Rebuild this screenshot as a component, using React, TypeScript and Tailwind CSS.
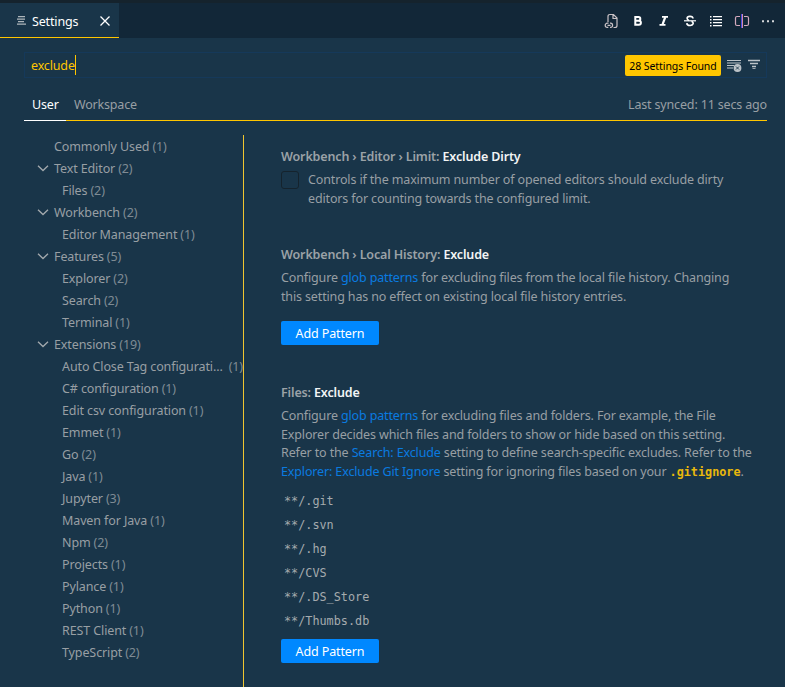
import type { ReactNode } from "react";

type TreeItem = { label: string; count: number; level: 0 | 1; open?: boolean; clipped?: boolean };

const tree: TreeItem[] = [
  { label: "Commonly Used", count: 1, level: 0 },
  { label: "Text Editor", count: 2, level: 0, open: true },
  { label: "Files", count: 2, level: 1 },
  { label: "Workbench", count: 2, level: 0, open: true },
  { label: "Editor Management", count: 1, level: 1 },
  { label: "Features", count: 5, level: 0, open: true },
  { label: "Explorer", count: 2, level: 1 },
  { label: "Search", count: 2, level: 1 },
  { label: "Terminal", count: 1, level: 1 },
  { label: "Extensions", count: 19, level: 0, open: true },
  { label: "Auto Close Tag configurati...", count: 1, level: 1, clipped: true },
  { label: "C# configuration", count: 1, level: 1 },
  { label: "Edit csv configuration", count: 1, level: 1 },
  { label: "Emmet", count: 1, level: 1 },
  { label: "Go", count: 2, level: 1 },
  { label: "Java", count: 1, level: 1 },
  { label: "Jupyter", count: 3, level: 1 },
  { label: "Maven for Java", count: 1, level: 1 },
  { label: "Npm", count: 2, level: 1 },
  { label: "Projects", count: 1, level: 1 },
  { label: "Pylance", count: 1, level: 1 },
  { label: "Python", count: 1, level: 1 },
  { label: "REST Client", count: 1, level: 1 },
  { label: "TypeScript", count: 2, level: 1 },
];

const patterns = ["**/.git", "**/.svn", "**/.hg", "**/CVS", "**/.DS_Store", "**/Thumbs.db"];

function Chevron() {
  return (
    <svg className="h-4 w-4" viewBox="0 0 16 16" fill="none" stroke="#a3a9ad" strokeWidth="1.3">
      <path d="M3 5.700 8 10.500l5-4.800" />
    </svg>
  );
}

function Toolbar() {
  return (
    <div className="ml-auto flex items-center gap-[10px] pr-[9px]">
      <svg className="h-4 w-4" viewBox="0 0 16 16" fill="none" stroke="#c9c2c6" strokeWidth="1.2">
        <path d="M4 9V3.500q0-2 2-2h3.500L13 5v7.500q0 2-2 2H9.500M9 1.500V5.500h4" />
        <path d="M4.500 10.200H3.300a2.100 2.100 0 0 0 0 4.200h1M6 14.400h.5a2.100 2.100 0 0 0 0-4.200H6M3.500 12.300h3" />
      </svg>
      <svg className="h-4 w-4" viewBox="0 0 16 16" fill="none" stroke="#fff" strokeWidth="2">
        <path d="M5.300 4.100h3.200a1.800 1.800 0 0 1 0 3.600H5.300M5.300 7.700h3.600a2 2 0 0 1 0 4H5.300ZM5.300 3.100v9.600" />
      </svg>
      <svg className="h-4 w-4" viewBox="0 0 16 16" fill="none" stroke="#fff">
        <path d="M6 3.800h6M3.500 11.800h6" strokeWidth="1.700" />
        <path d="M9.300 4 6.500 11.700" strokeWidth="2.200" />
      </svg>
      <svg className="h-4 w-4" viewBox="0 0 16 16" fill="none" stroke="#fff" strokeWidth="1.600">
        <path d="M2 7.800h12" strokeWidth="1.200" />
        <path d="M11 5.500C10.800 2.700 5.200 2.700 5.100 5.300c0 1 .7 1.700 1.800 2.100M9.500 8.300c3.200 1.300 1.400 4.300-1.500 4.200-1.800 0-3.100-.8-3.200-2.400" />
      </svg>
      <svg className="h-4 w-4" viewBox="0 0 16 16" fill="#fff">
        <path d="M2 3h1.500v1.500H2zM2 6h1.500v1.500H2zM2 9h1.500v1.500H2zM2 12h1.500v1.500H2zM5 3h9v1.200H5zM5 6h9v1.200H5zM5 9h9v1.200H5zM5 12h9v1.200H5z" />
      </svg>
      <svg className="h-4 w-4" viewBox="0 0 16 16" fill="none">
        <path d="M6 3.500H3q-1.500 0-1.500 1.500v6q0 1.500 1.500 1.500h3M10 3.500h3q1.500 0 1.500 1.500v6q0 1.500-1.500 1.500h-3" stroke="#d3a9bd" strokeWidth="1.200" />
        <path d="M7.500 1v14" stroke="#4a4fe0" strokeWidth="1" />
        <path d="M8.500 1v14" stroke="#d68ba8" strokeWidth="1" />
      </svg>
      <svg className="h-4 w-4" viewBox="0 0 16 16" fill="#d5d8da">
        <path d="M2 7.200h2v2H2zM7 7.200h2v2H7zM12 7.200h2v2h-2z" />
      </svg>
    </div>
  );
}

function Title({ path, name }: { path: string; name: string }) {
  return (
    <h2 className="h-[18px] text-[12.500px] leading-[18px] font-semibold tracking-[-0.140px] text-[#9ba2a7]">
      {path} <span className="text-[#f2f4f5]">{name}</span>
    </h2>
  );
}

function Line({ children }: { children: ReactNode }) {
  return <div className="whitespace-nowrap">{children}</div>;
}

function Link({ children }: { children: ReactNode }) {
  return <span className="text-[#0a7be0]">{children}</span>;
}

function AddButton() {
  return (
    <button className="block h-6 w-[98px] rounded-[2px] bg-[#0088ff] pt-px text-[12.500px] leading-[24px] tracking-[-0.120px] text-white">
      Add Pattern
    </button>
  );
}

export default function App() {
  return (
    <div className="flex h-[687px] w-[785px] flex-col overflow-hidden bg-[#193549] font-['Noto_Sans',sans-serif] text-[12.500px] text-[#989fa4]">
      <div className="h-[3px] bg-[#15232d]" />
      <header className="flex h-[35px] bg-[#122738]">
        <div className="flex w-[119px] items-center border-b border-[#ffc600] bg-[#193549] pl-4 text-white">
          <svg className="h-4 w-4" viewBox="0 0 16 16" fill="#aeb6bb">
            <path d="M2 4h7v1.300H2zM1 6.500h8v1.300H1zM2 9h6v1.300H2zM1 11.500h9v1.300H1z" />
          </svg>
          <span className="pt-[4px] tracking-[-0.150px]">Settings</span>
          <svg className="ml-auto mr-[6px] mt-px h-4 w-4" viewBox="0 0 16 16" stroke="#fff" strokeWidth="1.300">
            <path d="m3.500 3.500 9 9M12.500 3.500l-9 9" />
          </svg>
        </div>
        <Toolbar />
      </header>

      <div className="mt-[14px] ml-6 flex h-[26px] w-[743px] items-center border border-[#15395a] pl-[6px] text-[#ffc600]">
        <span className="pt-[2px] tracking-[-0.150px]">exclude</span>
        <span className="h-5 w-px bg-[#ffc600]" />
        <div className="ml-auto flex items-center pr-[4px]">
          <span className="mt-px h-[21px] w-24 rounded-[2px] bg-[#ffc600] text-center text-[10.500px] leading-[23px] tracking-[-0.080px] whitespace-nowrap text-black">
            28 Settings Found
          </span>
          <svg className="ml-[5px] h-4 w-4" viewBox="0 0 16 16" fill="none" stroke="#bcc3c8" strokeWidth="1.200">
            <path d="M1 3.500h14M1 6h14M1 8.500h7M1 11h6" />
            <circle cx="11.500" cy="11" r="3.900" fill="#bcc3c8" stroke="none" />
            <path d="m10 9.500 3 3M13 9.500l-3 3" stroke="#193549" strokeWidth="0.900" />
          </svg>
          <svg className="ml-1 h-4 w-4" viewBox="0 0 16 16" stroke="#bcc3c8" strokeWidth="1.300">
            <path d="M2 3.500h12M4 6.500h8M6 9.500h4" />
            <path d="M6.500 11.500h3" strokeWidth="0.800" />
          </svg>
        </div>
      </div>

      <nav className="ml-6 flex h-[43px] w-[743px] border-b border-[#ffc600] pt-[10px] leading-[33px]">
        <span className="h-[33px] w-[42px] border-b border-white pl-2 leading-[33px] tracking-[-0.150px] text-white">User</span>
        <span className="pl-2 tracking-[-0.180px]">Workspace</span>
        <span className="ml-auto tracking-[-0.160px]">Last synced: 11 secs ago</span>
      </nav>

      <main className="flex min-h-0 flex-1 pt-[14px]">
        <aside className="w-[244px] shrink-0 border-r border-[#f0c530] tracking-[-0.110px]">
          {tree.map((item) => (
            <div key={item.label} className={item.level ? "flex h-[22px] items-center pl-[62px] whitespace-nowrap" : "flex h-[22px] items-center pl-[35px] whitespace-nowrap"}>
              {item.level === 0 && <span className="mr-[3px] h-4 w-4">{item.open && <Chevron />}</span>}
              <span className="pt-[2px]">{item.label}</span>
              <span className={item.clipped ? "ml-auto pt-[2px] text-[#7f8b94]" : "ml-[3px] pt-[2px] text-[#7f8b94]"}>({item.count})</span>
            </div>
          ))}
        </aside>

        <div className="pl-[37px] pt-[13px] leading-[18.400px] tracking-[-0.140px]">
          <section className="h-[98px]">
            <Title path="Workbench › Editor › Limit:" name="Exclude Dirty" />
            <div className="mt-[5px] flex">
              <span className="mr-[9px] h-[18px] w-[18px] rounded-[3px] border border-[#15232d]" />
              <div className="pt-[0.300px]">
                <Line>Controls if the maximum number of opened editors should exclude dirty</Line>
                <Line>editors for counting towards the configured limit.</Line>
              </div>
            </div>
          </section>

          <section className="h-[138px]">
            <Title path="Workbench › Local History:" name="Exclude" />
            <div className="mt-[5px] h-[52px] pt-[0.300px]">
              <Line>Configure <Link>glob patterns</Link> for excluding files from the local file history. Changing</Line>
              <Line>this setting has no effect on existing local file history entries.</Line>
            </div>
            <AddButton />
          </section>

          <section>
            <Title path="Files:" name="Exclude" />
            <div className="mt-[5px] h-[82px] pt-[0.300px]">
              <Line>Configure <Link>glob patterns</Link> for excluding files and folders. For example, the File</Line>
              <Line>Explorer decides which files and folders to show or hide based on this setting.</Line>
              <Line>Refer to the <Link>Search: Exclude</Link> setting to define search-specific excludes. Refer to the</Line>
              <Line>
                <Link>Explorer: Exclude Git Ignore</Link> setting for ignoring files based on your{" "}
                <code className="font-['DejaVu_Sans_Mono',monospace] text-[11.800px] tracking-normal font-bold text-[#e8b80c]">.gitignore</code>.
              </Line>
            </div>
            <ul className="mb-[6px] pl-[3px] font-['DejaVu_Sans_Mono',monospace] text-[11.800px] tracking-normal text-[#a5abae]">
              {patterns.map((p) => (
                <li key={p} className="h-6 leading-6">{p}</li>
              ))}
            </ul>
            <AddButton />
          </section>
        </div>
      </main>
    </div>
  );
}
